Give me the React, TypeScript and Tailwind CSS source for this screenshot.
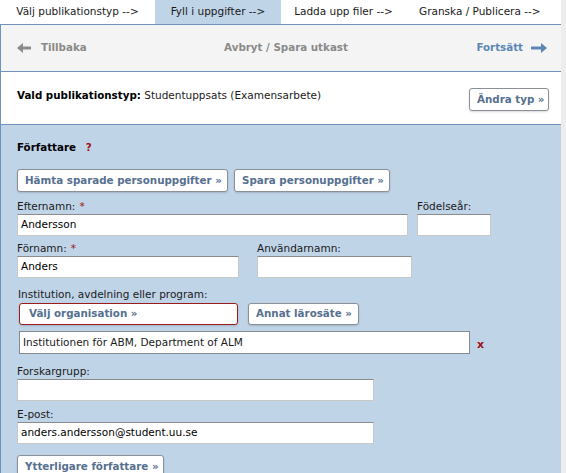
import React from 'react';

const tabs = [
  { label: 'Välj publikationstyp -->', active: false, w: 'w-[155px] justify-center' },
  { label: 'Fyll i uppgifter -->', active: true, w: 'w-[126px] justify-center' },
  { label: 'Ladda upp filer -->', active: false, w: 'w-[125px] justify-center' },
  { label: 'Granska / Publicera -->', active: false, w: 'flex-1 pl-[13px]' },
];

function Arrow({ dir, color }: { dir: 'left' | 'right'; color: string }) {
  const d =
    dir === 'left'
      ? 'M0 5 L6 0 L6 3.5 L14 3.5 L14 6.5 L6 6.5 L6 10 Z'
      : 'M16 5 L10 0 L10 3.5 L0 3.5 L0 6.5 L10 6.5 L10 10 Z';
  return (
    <svg width={dir === 'left' ? 14 : 16} height={10} viewBox={dir === 'left' ? '0 0 14 10' : '0 0 16 10'}>
      <path d={d} fill={color} />
    </svg>
  );
}

function Btn({ children, className = '' }: { children: React.ReactNode; className?: string }) {
  return (
    <button
      className={`bg-white border border-[#8b8f96] rounded-[3px] shadow-[0_1px_2px_rgba(0,0,0,0.15)] px-[7px] text-[10.3px] font-bold text-[#56708f] whitespace-nowrap ${className}`}
    >
      {children}
    </button>
  );
}

function Field({ label, req, width, value, className = '' }: { label: string; req?: boolean; width: number; value?: string; className?: string }) {
  return (
    <div className={className}>
      <div className="leading-[13px] h-[13px] mb-[1px]">
        {label}
        {req && <span className="text-[#a01010] ml-[4px]">*</span>}
      </div>
      <div
        className="h-[22px] bg-white border border-[#c8c8c8] border-t-[#8c8c8c] flex items-center px-[3px] text-[10.5px] text-black"
        style={{ width }}
      >
        {value}
      </div>
    </div>
  );
}

export default function App() {
  return (
    <div
      className="w-[566px] h-[473px] overflow-hidden bg-[#ededed] text-[10.5px] text-[#1a1a1a]"
      style={{ fontFamily: '"DejaVu Sans", Verdana, sans-serif' }}
    >
      <div className="w-[561px] h-full bg-white">
        {/* steps */}
        <div className="flex h-[25px] border-b border-[#6f93bd]">
          {tabs.map(t => (
            <div
              key={t.label}
              className={`flex items-center whitespace-nowrap ${t.w} ${t.active ? 'bg-[#c0d4e8]' : ''}`}
            >
              {t.label}
            </div>
          ))}
        </div>

        <div className="border-l border-[#6f93bd] h-full">
          {/* nav */}
          <div className="h-[47px] bg-[#f4f4f4] border-b border-[#6f93bd] flex items-center pl-[16px] pr-[14px] font-bold text-[10.3px]">
            <div className="flex items-center gap-[10px] text-[#8a8a8a] w-[150px]">
              <Arrow dir="left" color="#8a8a8a" />
              <span>Tillbaka</span>
            </div>
            <div className="flex-1 text-center text-[#8a8a8a] pl-[8px]">Avbryt / Spara utkast</div>
            <div className="flex items-center justify-end gap-[8px] text-[#5d86b5] w-[150px]">
              <span>Fortsätt</span>
              <Arrow dir="right" color="#5d86b5" />
            </div>
          </div>

          {/* chosen type */}
          <div className="h-[53px] border-b border-[#6f93bd] flex items-center justify-between pl-[16px] pr-[12px]">
            <div className="mb-[4px]">
              <span className="font-bold text-[10.3px] text-black">Vald publikationstyp:</span> Studentuppsats (Examensarbete)
            </div>
            <Btn className="h-[23px] mt-[3px] text-[#4b5b6c] w-[80px] px-0">Ändra typ »</Btn>
          </div>

          {/* authors */}
          <div className="bg-[#c0d4e8] h-full pl-[16px] pt-[16px]">
            <div className="font-bold text-[10.3px] text-black leading-[13px]">
              Författare <span className="text-[#a01010] ml-[6px]">?</span>
            </div>

            <div className="flex gap-[6px] mt-[15px]">
              <Btn className="h-[23px] w-[211px]">Hämta sparade personuppgifter »</Btn>
              <Btn className="h-[23px] w-[156px]">Spara personuppgifter »</Btn>
            </div>

            <div className="flex gap-[9px] mt-[8px]">
              <Field label="Efternamn:" req width={391} value="Andersson" />
              <Field label="Födelseår:" width={74} />
            </div>

            <div className="flex gap-[18px] mt-[6px]">
              <Field label="Förnamn:" req width={222} value="Anders" />
              <Field label="Användarnamn:" width={155} />
            </div>

            <div className="mt-[10px] leading-[13px] pl-[1px]">Institution, avdelning eller program:</div>
            <div className="pl-[2px]">
              <div className="flex gap-[10px] mt-[2px]">
                <Btn className="h-[22px] w-[219px] text-left pl-[9px] border-[#9b1c1c]">Välj organisation »</Btn>
                <Btn className="h-[22px] w-[111px]">Annat lärosäte »</Btn>
              </div>
              <div className="flex items-center mt-[6px]">
                <div className="w-[451px] h-[23px] bg-white border border-[#86898e] flex items-center px-[3px]">
                  Institutionen för ABM, Department of ALM
                </div>
                <span className="ml-[7px] mt-[3px] text-[#a01010] font-bold text-[11px] leading-none">x</span>
              </div>
            </div>

            <Field label="Forskargrupp:" width={357} className="mt-[11px]" />
            <Field label="E-post:" width={357} value="anders.andersson@student.uu.se" className="mt-[7px]" />

            <Btn className="h-[23px] w-[147px] mt-[11px]">Ytterligare författare »</Btn>
          </div>
        </div>
      </div>
    </div>
  );
}
